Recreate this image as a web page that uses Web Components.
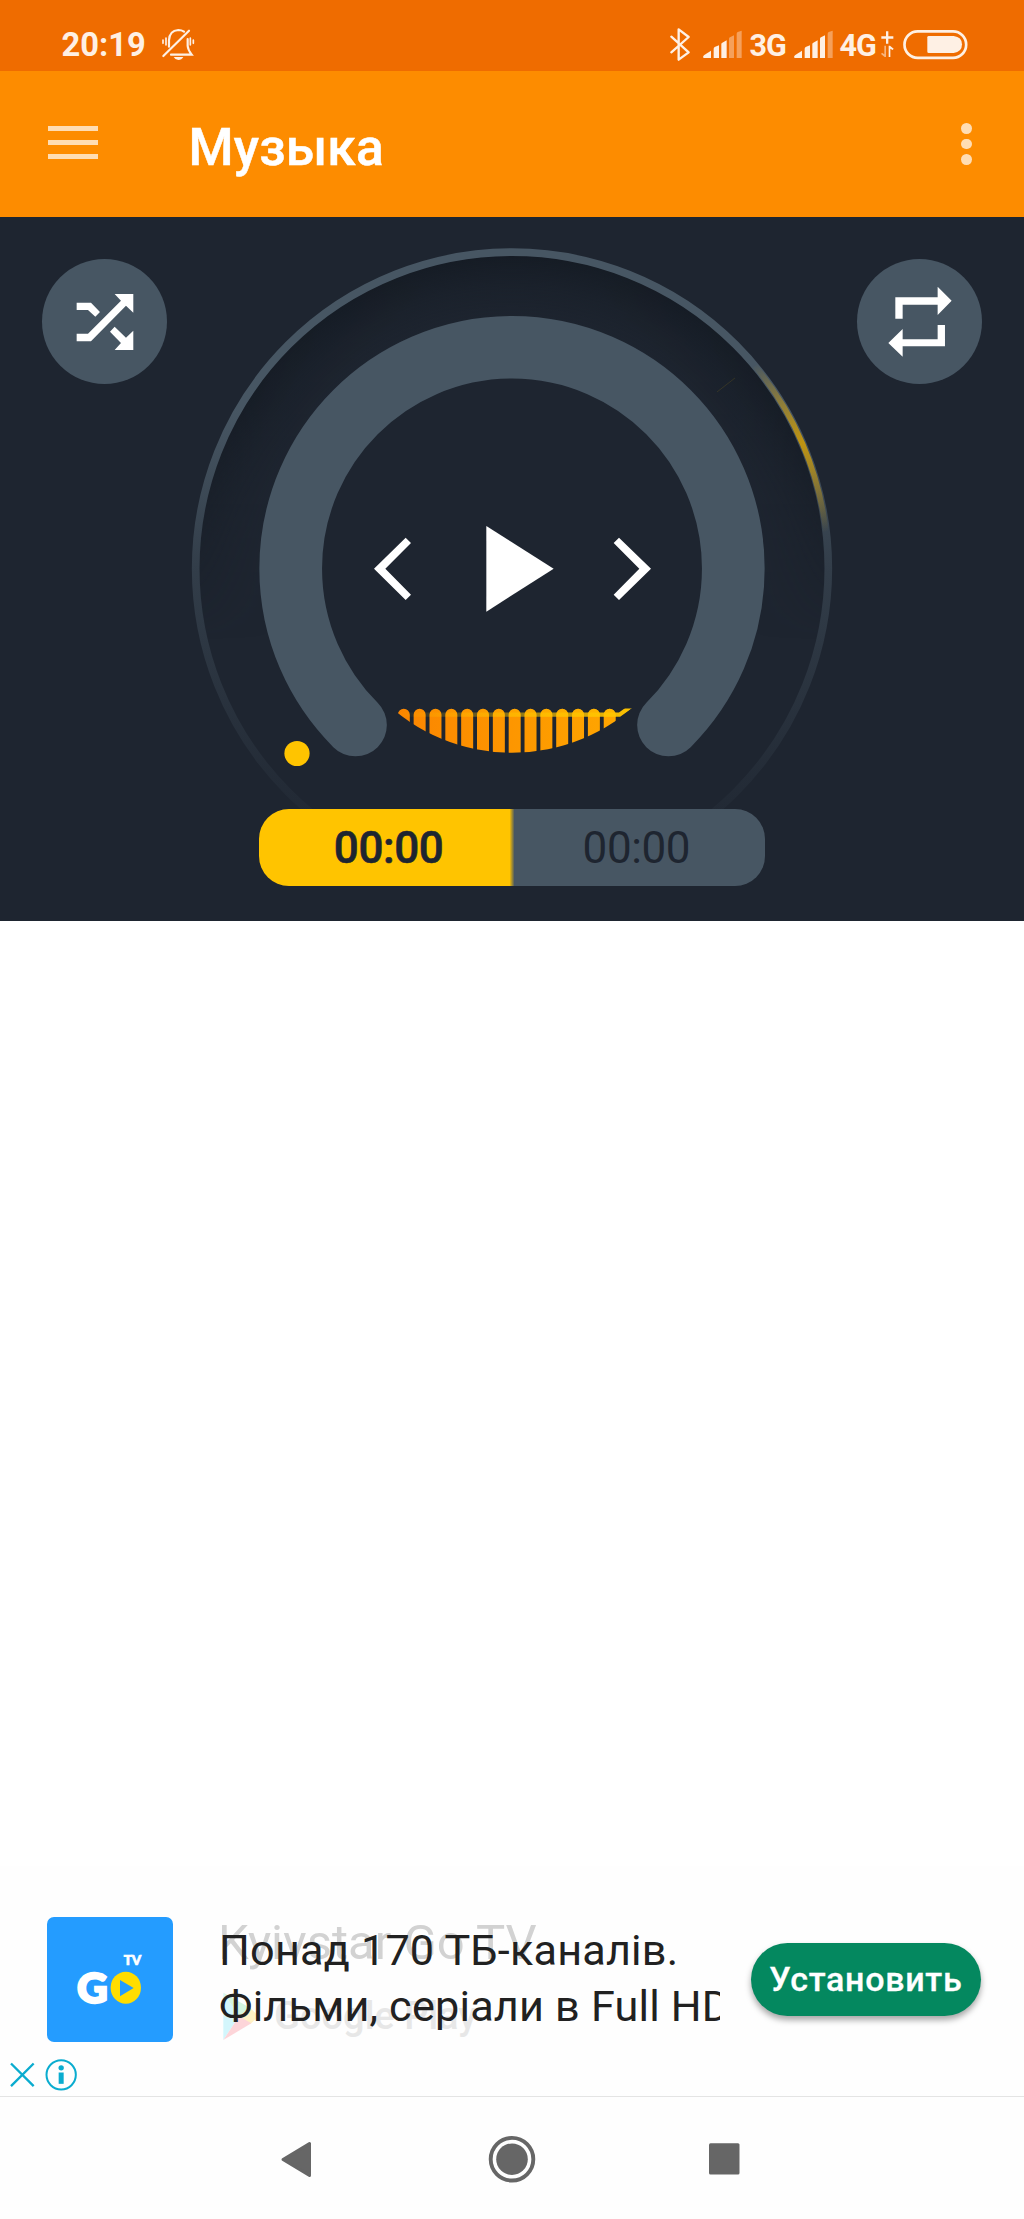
<!DOCTYPE html>
<html lang="ru">
<head>
<meta charset="utf-8">
<title>Музыка</title>
<style>
  html, body { margin: 0; height: 100%; }
  body {
    display: flex;
    flex-direction: column;
    width: 1024px;
    height: 2219px;
    overflow: hidden;
    background: #fff;
    font-family: Roboto, "Noto Sans", sans-serif;
  }
</style>
</head>
<body>

<status-bar time="20:19"></status-bar>
<app-toolbar>Музыка</app-toolbar>
<music-player>
  <round-button slot="left">
    <svg viewBox="125 128 376 376" fill="#fff">
      <path d="M229 259H272L299 287L285 301L263 281H229Z"/>
      <path d="M229 352H263L362 253L343 233H399V289L377 268L272 375H229Z"/>
      <path d="M343 331L377 364L399 343V401H343L362 380L329 346Z"/>
    </svg>
  </round-button>
  <player-dial slot="dial"></player-dial>
  <round-button slot="right">
    <svg viewBox="1035 128 376 376" fill="#fff">
      <path d="M1150 243H1277V211L1319 253L1277 296V265H1172V307H1150Z"/>
      <path d="M1299 326V390H1172V421L1129 380L1172 338V369H1277V326Z"/>
    </svg>
  </round-button>
  <time-pill slot="time" elapsed="00:00" total="00:00"></time-pill>
</music-player>
<track-list></track-list>
<ad-banner>
  <span slot="title">Kyivstar Go TV</span>
  <span slot="store">Google Play</span>
  <span slot="text">Понад 170 ТБ-каналів.<br>Фільми, серіали в Full HD</span>
  <span slot="action">Установить</span>
</ad-banner>
<nav-bar></nav-bar>

<script>
  function define(name, html, init) {
    const template = document.createElement('template');
    template.innerHTML = html;
    window.customElements.define(name, class extends HTMLElement {
      constructor() {
        super();
        this.attachShadow({ mode: 'open' });
        this.shadowRoot.appendChild(template.content.cloneNode(true));
      }

      connectedCallback() {
        if (init) init(this, this.shadowRoot);
      }
    });
  }

  // icons of the status bar share one vertical scale: 3 units per pixel
  define('signal-bars', `
    <style>
      :host { display: block; width: 39px; height: 71px; }
      svg { display: block; }
    </style>
    <svg width="39" height="71" viewBox="189 0 117 213" fill="#fef0e4">
      <path d="M190 174V169Q190 167 193 165L213 152V174Z"/>
      <path d="M221 174V146Q221 143 224 141L237 136V174Z"/>
      <path d="M244 174V132Q244 129 247 128L260 121V174Z"/>
      <path class="b4" d="M267 174V116Q267 113 270 112L282 106V174Z"/>
      <path opacity=".4" d="M290 174V101Q290 98 293 96L305 92V174Z"/>
    </svg>
  `, (el, root) => {
    if (el.getAttribute('level') === '3') root.querySelector('.b4').setAttribute('opacity', '.4');
  });

  define('status-bar', `
    <style>
      :host {
        display: flex;
        flex: none;
        height: 71px;
        box-sizing: border-box;
        padding-left: 61.500px;
        padding-right: 56px;
        background: #ef6c00;
        color: #fef0e4;
        font-weight: 700;
      }
      svg { display: block; flex: none; }
      .time { font-size: 32.700px; line-height: 91.500px; height: 71px; width: 99.500px; }
      .net { font-size: 30.500px; line-height: 91px; height: 71px; width: 36px; letter-spacing: -1px; }
      .gap { flex: 1; }
    </style>
    <div class="time"></div>
    <svg width="34" height="71" viewBox="483 0 102 213" fill="none" stroke="#fef0e4" stroke-width="6.500" stroke-linecap="round">
      <path d="M490 168L567 92"/>
      <path d="M507 140V121Q508 92 535 90Q545 90 552 95"/>
      <path d="M513 164H575Q564 150 563 138V117"/>
      <path d="M498 114V135M489 120V130M571 114V135M580 120V130" stroke-width="5"/>
      <path d="M521 171H550Q545 180 535 180Q526 180 521 171Z" fill="#fef0e4" stroke="none"/>
    </svg>
    <div class="gap"></div>
    <svg width="22" height="71" viewBox="83 0 66 213" fill="none" stroke="#fef0e4" stroke-width="7" stroke-linecap="round" stroke-linejoin="round">
      <path d="M90 110L142 157L112 179V88L142 111L90 157"/>
    </svg>
    <signal-bars level="3" style="margin-left:12.700px"></signal-bars>
    <div class="net" style="margin-left:7.300px">3G</div>
    <signal-bars level="4" style="margin-left:8px"></signal-bars>
    <div class="net" style="margin-left:7px">4G</div>
    <svg style="margin-left:5.500px" width="13" height="71" viewBox="722 0 39 213" fill="#fef0e4">
      <path d="M737 94H744V109H759V116H744V131H737V116H723V109H737Z"/>
      <path opacity=".55" d="M732 137H737V171H733L722 162L725 158L732 163Z"/>
      <path d="M745 137H749L760 146L757 150L750 146V171H745Z"/>
    </svg>
    <svg style="margin-left:9px" width="65" height="71" viewBox="788 0 195 213">
      <rect x="792.5" y="94" width="185" height="79.500" rx="39.500" fill="none" stroke="#fef0e4" stroke-width="8"/>
      <path d="M865 108H940Q965 111 965 133Q965 156 940 159H865Q861 159 861 155V112Q861 108 865 108Z" fill="#fef0e4"/>
    </svg>
  `, (el, root) => {
    root.querySelector('.time').textContent = el.getAttribute('time');
  });

  define('app-toolbar', `
    <style>
      :host {
        display: flex;
        flex: none;
        align-items: center;
        justify-content: space-between;
        height: 146px;
        box-sizing: border-box;
        padding: 0 52px 0 48px;
        background: #fd8c00;
        color: #fff;
      }
      .menu { display: flex; flex-direction: column; gap: 8.500px; width: 50px; margin-top: -3px; }
      .menu i { height: 5.300px; background: #ffddb3; }
      h1 { flex: 1; margin: 7px 0 0 90.500px; font-size: 51.500px; line-height: 60px; font-weight: 500; -webkit-text-stroke: .5px #fff; letter-spacing: .2px; }
      .more { display: flex; flex-direction: column; gap: 5px; }
      .more i { width: 10.800px; height: 10.800px; border-radius: 50%; background: #ffddb3; }
    </style>
    <div class="menu"><i></i><i></i><i></i></div>
    <h1><slot></slot></h1>
    <div class="more"><i></i><i></i><i></i></div>
  `);

  define('round-button', `
    <style>
      :host { display: block; width: 125.300px; height: 125.300px; border-radius: 50%; background: #475663; }
      ::slotted(svg) { display: block; width: 100%; height: 100%; }
    </style>
    <slot></slot>
  `);

  // the dial svg is drawn in page units, centre at 512, 568.5
  define('player-dial', `
    <style>
      :host { display: grid; width: 654px; height: 592.300px; }
      svg { grid-area: 1 / 1; display: block; }
      .controls { place-self: start center; margin-top: 283px; }
    </style>
    <svg width="654" height="592.300" viewBox="185 217 654 592.300" fill="none">
      <defs>
        <linearGradient id="ring" gradientUnits="userSpaceOnUse" x1="0" y1="248" x2="0" y2="889">
          <stop offset="0" stop-color="#475663"/>
          <stop offset=".25" stop-color="#475663"/>
          <stop offset=".5" stop-color="#475663" stop-opacity=".5"/>
          <stop offset=".75" stop-color="#475663" stop-opacity=".22"/>
          <stop offset=".9" stop-color="#475663" stop-opacity=".06"/>
        </linearGradient>
        <radialGradient id="depth" gradientUnits="userSpaceOnUse" cx="512" cy="568.5" r="313">
          <stop offset=".78" stop-color="#121820" stop-opacity="0"/>
          <stop offset=".9" stop-color="#121820" stop-opacity=".3"/>
          <stop offset="1" stop-color="#121820" stop-opacity=".7"/>
        </radialGradient>
        <linearGradient id="fade" gradientUnits="userSpaceOnUse" x1="0" y1="256" x2="0" y2="640">
          <stop offset="0" stop-color="#fff"/>
          <stop offset=".4" stop-color="#fff" stop-opacity=".85"/>
          <stop offset="1" stop-color="#fff" stop-opacity="0"/>
        </linearGradient>
        <mask id="top" maskUnits="userSpaceOnUse" x="185" y="217" width="654" height="593">
          <rect x="185" y="217" width="654" height="593" fill="url(#fade)"/>
        </mask>
        <linearGradient id="glow" gradientUnits="userSpaceOnUse" x1="755" y1="364" x2="826" y2="532">
          <stop offset="0" stop-color="#ffc107" stop-opacity="0"/>
          <stop offset=".5" stop-color="#d49f04" stop-opacity=".85"/>
          <stop offset="1" stop-color="#ffc107" stop-opacity="0"/>
        </linearGradient>
        <linearGradient id="bar" gradientUnits="userSpaceOnUse" x1="398" y1="0" x2="631" y2="0">
          <stop offset="0" stop-color="#fb8500"/>
          <stop offset="1" stop-color="#ffa800"/>
        </linearGradient>
        <linearGradient id="line" gradientUnits="userSpaceOnUse" x1="398" y1="0" x2="631" y2="0">
          <stop offset="0" stop-color="#ffc400" stop-opacity="0"/>
          <stop offset="1" stop-color="#ffc400"/>
        </linearGradient>
        <clipPath id="bowl"><circle cx="512" cy="568.5" r="184.300"/></clipPath>
        <clipPath id="caps"><rect x="390" y="708.5" width="250" height="60"/></clipPath>
      </defs>
      <circle cx="512" cy="568.5" r="313" fill="url(#depth)" mask="url(#top)"/>
      <circle cx="512" cy="568.5" r="316.300" stroke="url(#ring)" stroke-width="7.700"/>
      <path d="M755 366.100A316.300 316.300 0 0 1 826 532" stroke="url(#glow)" stroke-width="5.500"/>
      <path d="M717 392L735 378" stroke="#ffc400" stroke-width="1" opacity=".12"/>
      <path d="M355.500 725A221.300 221.300 0 1 1 668.500 725" stroke="#475663" stroke-width="62.700" stroke-linecap="round"/>
      <circle cx="297" cy="753.5" r="12.600" fill="#ffc400"/>
      <g clip-path="url(#bowl)">
        <g class="bars" fill="url(#bar)"></g>
        <g class="tips" fill="url(#line)" opacity=".6"></g>
        <path clip-path="url(#caps)" d="M398 714.700H619.500L635 703.500" stroke="url(#line)" stroke-width="4.200"/>
      </g>
    </svg>
    <svg class="controls" width="340" height="140" viewBox="0 0 1020 420" fill="#fff" style="transform:translateX(-2px)">
      <path d="M197 113L213 129L136 206L213 284L197 300L102 206Z"/>
      <path d="M439 78L641 206L439 335Z"/>
      <path d="M837 113L933 206L837 300L821 284L898 206L821 129Z"/>
    </svg>
  `, (el, root) => {
    const bars = root.querySelector('.bars');
    const tips = root.querySelector('.tips');
    let barPath = '';
    let tipPath = '';
    for (let i = 0; i < 14; i++) {
      const x = 397.8 + i * 15.84;
      barPath += `M${x} 760V714.7a6 6 0 0 1 12 0V760Z`;
      tipPath += `M${x} 716.8V714.7a6 6 0 0 1 12 0V716.8Z`;
    }
    bars.innerHTML = `<path d="${barPath}"/>`;
    tips.innerHTML = `<path d="${tipPath}"/>`;
  });

  define('time-pill', `
    <style>
      :host {
        display: flex;
        width: 506.500px;
        height: 76.400px;
        border-radius: 30px;
        overflow: hidden;
        background: linear-gradient(90deg, #ffc400 250.500px, #475663 255.500px);
        color: #1e2530;
        font-size: 44px;
        line-height: 78px;
        text-align: center;
      }
      div { flex: 1; }
      .elapsed { font-weight: 500; -webkit-text-stroke: .6px #1e2530; padding-left: 6px; letter-spacing: -.4px; }
      .total { padding-right: 5px; letter-spacing: -.4px; }
    </style>
    <div class="elapsed"></div>
    <div class="total"></div>
  `, (el, root) => {
    root.querySelector('.elapsed').textContent = el.getAttribute('elapsed');
    root.querySelector('.total').textContent = el.getAttribute('total');
  });

  define('music-player', `
    <style>
      :host {
        display: flex;
        flex: none;
        flex-direction: column;
        align-items: center;
        height: 703.500px;
        background: #1e2530;
      }
      .row { display: grid; grid-template-columns: 185px 654px 185px; width: 1024px; }
      .side { padding-top: 41.700px; display: flex; }
      .left { padding-left: 41.700px; }
      .right { padding-right: 41.700px; justify-content: flex-end; }
    </style>
    <div class="row">
      <div class="side left"><slot name="left"></slot></div>
      <slot name="dial"></slot>
      <div class="side right"><slot name="right"></slot></div>
    </div>
    <slot name="time"></slot>
  `);

  define('track-list', `
    <style>
      :host { display: block; flex: 1; background: #fff; }
    </style>
    <slot></slot>
  `);

  define('app-logo', `
    <style>
      :host { display: block; width: 125.300px; height: 125.300px; border-radius: 7px; overflow: hidden; background: #249cff; }
      svg { display: block; }
    </style>
    <svg width="125.300" height="125.300" viewBox="142 170 376 376" font-family="Lato, sans-serif" font-weight="900" fill="#fff">
      <text x="232" y="428" font-size="126" textLength="92" lengthAdjust="spacingAndGlyphs" stroke="#fff" stroke-width="7">G</text>
      <text x="372" y="315" font-size="38" textLength="53" lengthAdjust="spacingAndGlyphs" stroke="#fff" stroke-width="2">TV</text>
      <ellipse cx="378.5" cy="382" rx="45.5" ry="48" fill="#fd0"/>
      <path d="M361 359L402 383L361 408Z" fill="#249cff"/>
    </svg>
  `);

  define('ad-banner', `
    <style>
      :host { display: block; flex: none; height: 230px; background: #fefefe; }
      .row { display: flex; align-items: flex-start; padding: 50.500px 0 0 47.300px; height: 125.300px; }
      .caption { display: grid; width: 501px; height: 140px; margin-left: 46.500px; overflow: hidden; white-space: nowrap; }
      .ghost, .text { grid-area: 1 / 1; }
      .title { margin: 1.500px 0 0 -1px; font-size: 49px; line-height: 50px; color: #d2d2d2; }
      .store { display: flex; margin: 23px 0 0 4px; font-size: 38px; line-height: 50px; color: #e7e7e7; font-weight: 500; }
      .store svg { margin-right: 15px; flex: none; }
      .text { margin-top: 6px; font-size: 43.200px; line-height: 56.700px; letter-spacing: .2px; color: #212121; }
      .button {
        width: 229.500px;
        height: 73.300px;
        margin: 26px 0 0 31px;
        border-radius: 37px;
        background: #04885f;
        box-shadow: 0 4px 6px rgba(0, 0, 0, .35);
        color: #fff;
        font-size: 34px;
        line-height: 73px;
        font-weight: 500;
        -webkit-text-stroke: .3px #fff;
        text-align: center;
        letter-spacing: .7px;
      }
      .choices { display: block; }
    </style>
    <div class="row">
      <app-logo></app-logo>
      <div class="caption">
        <div class="ghost">
          <div class="title"><slot name="title"></slot></div>
          <div class="store">
            <svg width="36" height="50" viewBox="670 391 108 150">
              <path d="M671 396V538L718 467Z" fill="#d3f6fc"/>
              <path d="M671 396L752 442L718 467Z" fill="#d5f5df"/>
              <path d="M752 442L777 467L752 490L718 467Z" fill="#fff1c4"/>
              <path d="M671 538L718 467L755 488Z" fill="#fdd5d9"/>
            </svg>
            <slot name="store"></slot>
          </div>
        </div>
        <div class="text"><slot name="text"></slot></div>
      </div>
      <div class="button"><slot name="action"></slot></div>
    </div>
    <svg class="choices" width="80" height="54" viewBox="0 544.500 240 162" fill="none" stroke="#0aaccf">
      <path d="M33 609L101 677M101 609L33 677" stroke-width="7"/>
      <circle cx="183.5" cy="643" r="44" stroke-width="6"/>
      <circle cx="183.5" cy="622" r="8" fill="#0aaccf" stroke="none"/>
      <rect x="176" y="636" width="15" height="34" fill="#0aaccf" stroke="none"/>
    </svg>
  `);

  define('nav-bar', `
    <style>
      :host {
        display: flex;
        flex: none;
        align-items: flex-start;
        justify-content: space-between;
        height: 123px;
        box-sizing: border-box;
        border-top: 1px solid #e4e4e4;
        padding: 37px 276px 0 272px;
        background: #fefefe;
      }
      svg { display: block; }
    </style>
    <svg width="48" height="50" viewBox="0 0 48 50"><path d="M11 25.500L37.500 9.500V41.500Z" fill="#666" stroke="#666" stroke-width="3" stroke-linejoin="round"/></svg>
    <svg width="54" height="50" viewBox="0 0 54 50">
      <circle cx="29" cy="25.200" r="21.300" fill="none" stroke="#666" stroke-width="3.900"/>
      <circle cx="29" cy="25.200" r="15.800" fill="#666"/>
    </svg>
    <svg width="48" height="50" viewBox="0 0 48 50"><rect x="9" y="9.200" width="30.500" height="31.400" rx="1.500" fill="#666"/></svg>
  `);
</script>
</body>
</html>
